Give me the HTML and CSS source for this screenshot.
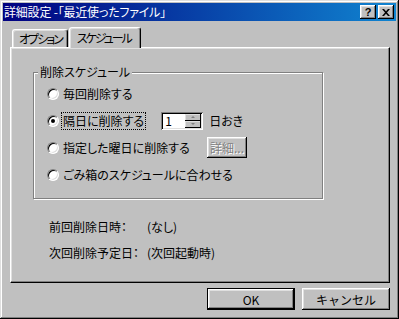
FILE: index.html
```html
<!DOCTYPE html>
<html lang="ja">
<head>
  <meta charset="UTF-8" />
  <title>詳細設定</title>
  <link rel="stylesheet" href="styles.css">
</head>
<body>

  <div class="window">
    <div class="titlebar">
      <span class="title">詳細設定 -「最近使ったファイル」</span>
      <div class="title-btns">
        <button class="tbtn help">?</button>
        <button class="tbtn">
          <svg width="8" height="7" viewBox="0 0 8 7">
            <path d="M0 0h2l2 2.2L6 0h2L5 3.5 8 7H6L4 4.8 2 7H0l3-3.5z" fill="#000"/>
          </svg>
        </button>
      </div>
    </div>

    <div class="dialog">
      <div class="tabs">
        <div class="tab">オプション</div>
        <div class="tab active">スケジュール</div>
      </div>

      <div class="panel">
        <fieldset class="group">
          <legend>削除スケジュール</legend>

          <div class="row">
            <span class="radio"></span>
            <span>毎回削除する</span>
          </div>

          <div class="row">
            <span class="radio checked"></span>
            <span class="focus">隔日に削除する</span>
            <div class="spin">
              <span class="spin-value">1</span>
              <span class="spin-btns">
                <span class="up"></span>
                <span class="down"></span>
              </span>
            </div>
            <span class="days">日おき</span>
          </div>

          <div class="row">
            <span class="radio"></span>
            <span class="wide">指定した曜日に削除する</span>
            <button class="btn-detail" disabled>詳細...</button>
          </div>

          <div class="row">
            <span class="radio"></span>
            <span>ごみ箱のスケジュールに合わせる</span>
          </div>
        </fieldset>

        <!-- 削除日時 -->
        <div class="info">
          <span>前回削除日時：</span><span>(なし)</span>
          <span>次回削除予定日：</span><span>(次回起動時)</span>
        </div>
      </div>

      <div class="actions">
        <button class="btn default">OK</button>
        <button class="btn">キャンセル</button>
      </div>
    </div>
  </div>

</body>
</html>
```

FILE: styles.css
```css
body {
  margin: 0;
  background: #c0c0c0;
  font-family: "Noto Sans CJK JP", sans-serif;
  font-size: 12px;
  font-feature-settings: "palt";
  color: #000;
}

button {
  font-family: inherit;
  font-size: 12px;
  color: #000;
}

.window {
  width: 399px;
  height: 319px;
  box-sizing: border-box;
  padding: 3px;
  background: #c0c0c0;
  box-shadow:
    inset -1px -1px #000,
    inset 1px 1px #dfdfdf,
    inset -2px -2px #808080,
    inset 2px 2px #fff;
}

/* Thanh tiêu đề */
.titlebar {
  height: 18px;
  display: flex;
  align-items: center;
  justify-content: space-between;
  padding: 0 2px 0 1px;
  background: linear-gradient(90deg, #000080, #1084d0);
  color: #fff;
  line-height: 12px;
}

.title {
  letter-spacing: -0.2px;
}

.title-btns {
  display: flex;
  gap: 2px;
}

.tbtn {
  width: 16px;
  height: 14px;
  padding: 0;
  border: 0;
  background: #c0c0c0;
  box-shadow:
    inset -1px -1px #000,
    inset 1px 1px #fff,
    inset -2px -2px #808080,
    inset 2px 2px #dfdfdf;
  display: flex;
  align-items: center;
  justify-content: center;
}

.tbtn.help {
  font: bold 11px "Liberation Sans", sans-serif;
  line-height: 11px;
}

.dialog {
  padding: 6px 6px 0 7px;
}

/* Tabs */
.tabs {
  display: flex;
  align-items: flex-end;
  height: 20px;
  padding-left: 2px;
}

.tab {
  height: 18px;
  box-sizing: border-box;
  padding: 0 5px 0 6px;
  border: 1px solid #fff;
  border-right-color: #000;
  border-bottom: 0;
  border-radius: 3px 3px 0 0;
  box-shadow: inset -1px 0 #808080, inset 1px 1px #dfdfdf;
  display: flex;
  align-items: center;
  letter-spacing: -2px;
}

.tab.active {
  height: 21px;
  margin-left: 1px;
  margin-bottom: -1px;
  padding: 0 9px 1px 7px;
  position: relative;
  z-index: 1;
  background: #c0c0c0;
}

.panel {
  height: 236px;
  box-sizing: border-box;
  border: 1px solid;
  border-color: #fff #000 #000 #fff;
  box-shadow: inset -1px -1px #808080, inset 1px 1px #dfdfdf;
  padding: 18px 0 0 22px;
}

/* Group box */
.group {
  margin: 0;
  width: 290px;
  box-sizing: border-box;
  border: 1px solid #808080;
  box-shadow: 1px 1px #fff, inset 1px 1px #fff;
  padding: 2px 0 10px 13px;
}

.group legend {
  padding: 0 2px;
  margin-left: -9px;
  line-height: 12px;
  background: #c0c0c0;
}

.row {
  display: flex;
  align-items: center;
  height: 27px;
  line-height: 14px;
}

.radio {
  width: 12px;
  height: 12px;
  box-sizing: border-box;
  border-radius: 50%;
  background: #fff;
  border: 1px solid;
  border-color: #808080 #fff #fff #808080;
  box-shadow: inset 1px 1px #000, inset -1px -1px #dfdfdf;
  margin-right: 4px;
  display: flex;
  align-items: center;
  justify-content: center;
}

.radio.checked::after {
  content: "";
  width: 4px;
  height: 4px;
  border-radius: 50%;
  background: #000;
}

.focus {
  outline: 1px dotted #000;
  padding: 1px;
  margin-left: -1px;
}

.spin {
  margin-left: 16px;
  width: 42px;
  height: 18px;
  box-sizing: border-box;
  padding: 2px;
  display: flex;
  background: #fff;
  box-shadow:
    inset 1px 1px #808080,
    inset -1px -1px #fff,
    inset 2px 2px #000,
    inset -2px -2px #dfdfdf;
}

.spin-value {
  flex: 1;
  padding-left: 2px;
  line-height: 14px;
}

.spin-btns {
  width: 16px;
  display: flex;
  flex-direction: column;
}

.spin-btns span {
  flex: 1;
  background: #c0c0c0;
  box-shadow: inset -1px -1px #000, inset 1px 1px #dfdfdf;
  display: flex;
  align-items: center;
  justify-content: center;
}

.spin-btns span::after {
  content: "";
  border-left: 2px solid transparent;
  border-right: 2px solid transparent;
}

.spin-btns .up::after { border-bottom: 2px solid #808080; }
.spin-btns .down::after { border-top: 2px solid #808080; }

.days {
  margin-left: 6px;
}

.wide {
  width: 144px;
}

.btn-detail {
  width: 40px;
  height: 21px;
  padding: 0;
  border: 0;
  background: #c0c0c0;
  color: #808080;
  text-shadow: 1px 1px #fff;
  box-shadow:
    inset -1px -1px #000,
    inset 1px 1px #fff,
    inset -2px -2px #808080,
    inset 2px 2px #dfdfdf;
}

.info {
  display: grid;
  grid-template-columns: 98px auto;
  row-gap: 14px;
  line-height: 12px;
  margin: 22px 0 0 16px;
}

/* Nút OK / Hủy */
.actions {
  display: flex;
  justify-content: flex-end;
  gap: 7px;
  margin-top: 5px;
}

.btn {
  width: 88px;
  height: 22px;
  padding: 0;
  border: 0;
  background: #c0c0c0;
  box-shadow:
    inset -1px -1px #000,
    inset 1px 1px #fff,
    inset -2px -2px #808080,
    inset 2px 2px #dfdfdf;
}

.btn.default {
  border: 1px solid #000;
}
```
